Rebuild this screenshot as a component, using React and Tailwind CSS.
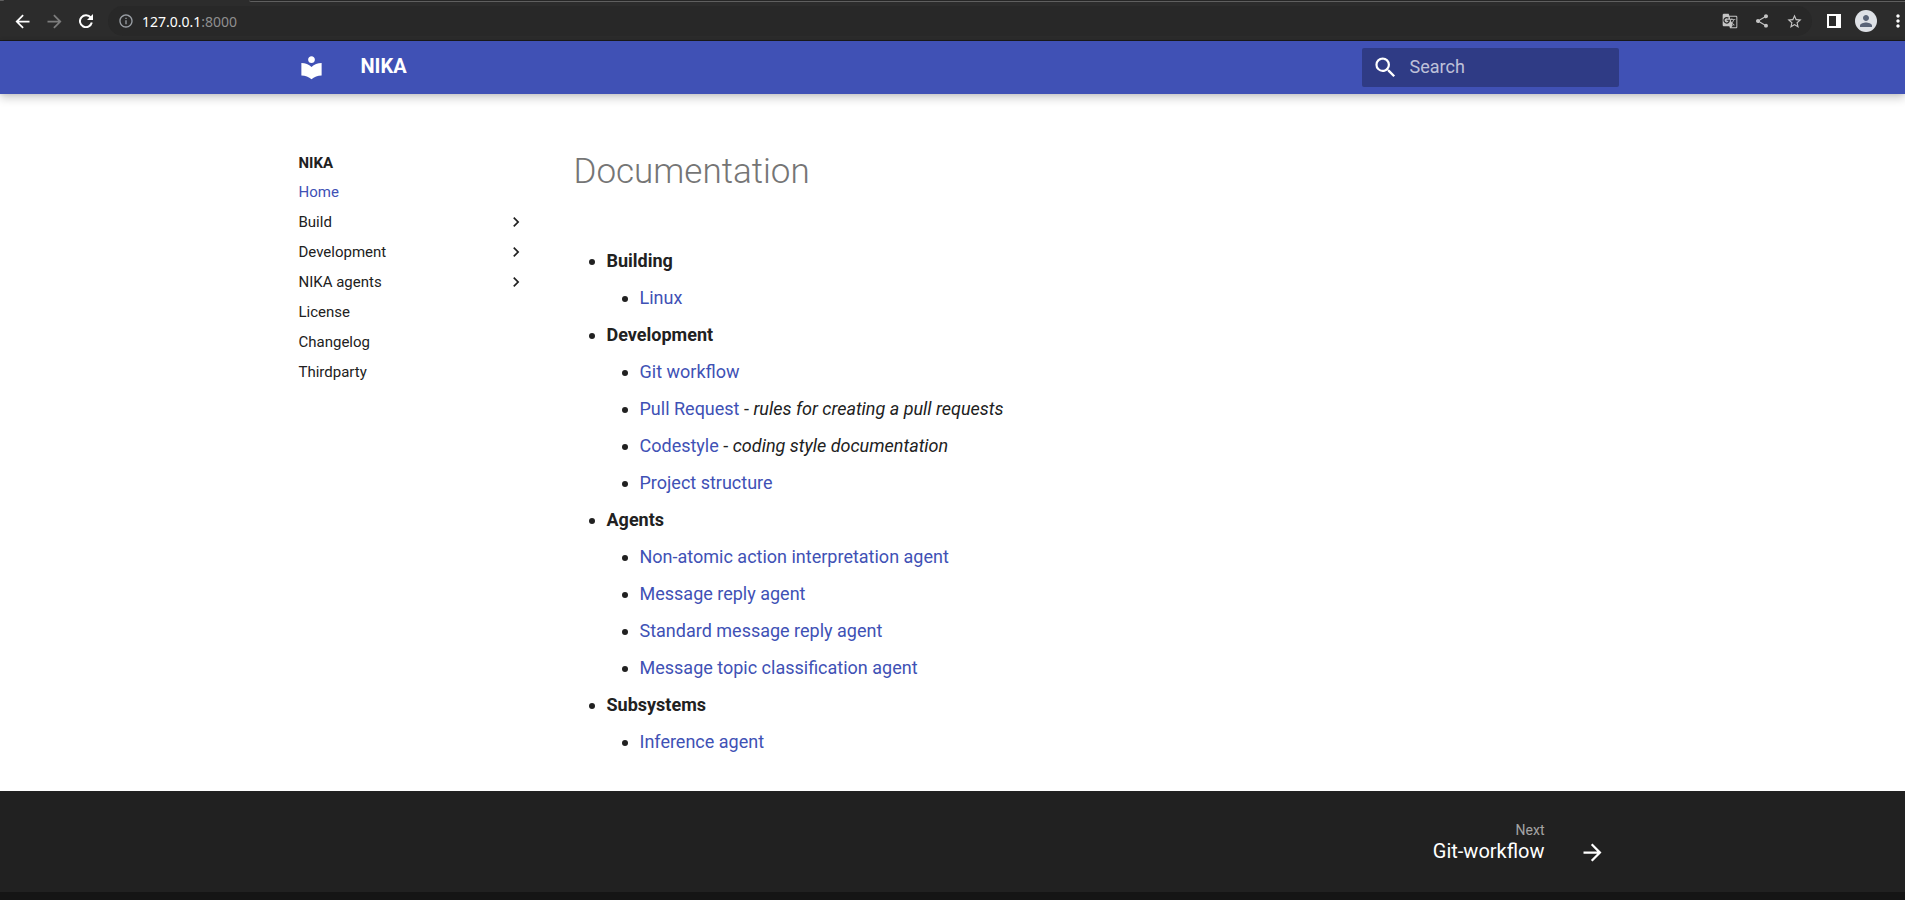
import React from "react";
import { MdArrowBack, MdArrowForward, MdInfoOutline, MdGTranslate, MdShare, MdStarBorder, MdPerson, MdMoreVert, MdLocalLibrary, MdSearch, MdChevronRight } from "react-icons/md";

const nav = [
  { label: "Home", active: true },
  { label: "Build", children: true },
  { label: "Development", children: true },
  { label: "NIKA agents", children: true },
  { label: "License" },
  { label: "Changelog" },
  { label: "Thirdparty" },
];

const sections = [
  { title: "Building", items: [["Linux"]] },
  {
    title: "Development",
    items: [
      ["Git workflow"],
      ["Pull Request", "rules for creating a pull requests"],
      ["Codestyle", "coding style documentation"],
      ["Project structure"],
    ],
  },
  {
    title: "Agents",
    items: [
      ["Non-atomic action interpretation agent"],
      ["Message reply agent"],
      ["Standard message reply agent"],
      ["Message topic classification agent"],
    ],
  },
  { title: "Subsystems", items: [["Inference agent"]] },
];

function IconButton({ label, className = "", children }) {
  return (
    <button type="button" aria-label={label} className={`flex shrink-0 items-center justify-center ${className}`}>
      {children}
    </button>
  );
}

function ReloadIcon() {
  return (
    <svg viewBox="0 0 14 14" width="14" height="14" fill="none" stroke="currentColor" strokeWidth="2">
      <path d="M11.8 3.6A6 6 0 1 0 12.8 8.6" />
      <path d="M14 0v6H8z" fill="currentColor" stroke="none" />
    </svg>
  );
}

function BrowserBar() {
  return (
    <div className="bg-[#2c2c2c]">
      <div className="flex h-0.5">
        <div className="h-px w-1 rounded-br-full bg-[#5f5f5f]" />
        <div className="w-[245px]" />
        <div className="flex-1 rounded-bl-sm border-b border-[#5f5f5f] bg-[#262626]" />
      </div>
      <div className="flex h-[39px] items-center border-b border-[#1b1b1b] pl-3">
        <IconButton label="Back" className="w-5 text-white"><MdArrowBack size={21} className="shrink-0" /></IconButton>
        <IconButton label="Forward" className="ml-3 w-5 text-[#7d7d7d]"><MdArrowForward size={21} className="shrink-0" /></IconButton>
        <IconButton label="Reload" className="ml-3 w-5 text-white"><ReloadIcon /></IconButton>
        <div className="ml-3 flex h-[30px] flex-1 items-center rounded-full bg-[#282828] px-2.5 text-[#c4c4c4]">
          <MdInfoOutline size={16} className="shrink-0 text-[#9a9fa5]" />
          <a href="#top" className="ml-2 flex-1 font-['Noto_Sans',sans-serif] text-[14px] text-[#8f8f8f]">
            <span className="text-white">127.0.0.1</span>:8000
          </a>
          <IconButton label="Translate" className="w-4"><MdGTranslate size={16} /></IconButton>
          <IconButton label="Share" className="ml-4 w-4"><MdShare size={16} /></IconButton>
          <IconButton label="Bookmark" className="ml-4 w-4"><MdStarBorder size={17} className="shrink-0" /></IconButton>
        </div>
        <IconButton label="Side panel" className="ml-[15px] w-3.5">
          <span className="size-3.5 border-2 border-r-[5px] border-white" />
        </IconButton>
        <IconButton label="Profile" className="ml-3.5 size-[22px] rounded-full bg-[#dee1e6] text-[#5a6478]"><MdPerson size={18} /></IconButton>
        <IconButton label="Menu" className="ml-3.5 w-3.5 text-white"><MdMoreVert size={20} className="shrink-0" /></IconButton>
      </div>
    </div>
  );
}

function Header() {
  return (
    <header className="relative bg-[#4051b5] text-white shadow-[0_0_4px_rgba(0,0,0,0.1),0_4px_9px_rgba(0,0,0,0.2)]">
      <div className="mx-auto flex h-[53px] max-w-[1342px] items-center pr-[5px]">
        <a href="#top" aria-label="NIKA home" className="ml-4"><MdLocalLibrary size={27} /></a>
        <span className="ml-9 flex-1 pb-[3px] text-[20px] leading-6 font-bold">NIKA</span>
        <label className="flex h-[39px] w-[257px] items-center rounded-xs bg-[#2f3b85] pl-2.5">
          <MdSearch size={27} className="shrink-0" />
          <input type="text" placeholder="Search" aria-label="Search" className="ml-[11px] min-w-0 flex-1 bg-transparent pb-0.5 text-[18px] outline-none placeholder:text-white/70" />
        </label>
      </div>
    </header>
  );
}

function Sidebar() {
  return (
    <nav aria-label="NIKA" className="w-[227px] shrink-0 pt-[13px] text-[15px] leading-5">
      <p className="mb-[9px] font-bold">NIKA</p>
      <ul className="flex flex-col gap-2.5">
        {nav.map((n) => (
          <li key={n.label}>
            <a href="#top" className={`flex items-center justify-between ${n.active ? "text-[#4051b5]" : ""}`}>
              {n.label}
              {n.children && <MdChevronRight size={20} />}
            </a>
          </li>
        ))}
      </ul>
    </nav>
  );
}

export default function App() {
  return (
    <div id="top" className="flex min-h-screen flex-col bg-white font-[Roboto,sans-serif] text-[#212121]">
      <BrowserBar />
      <Header />
      <main className="mx-auto flex w-full max-w-[1342px] flex-1 pt-[46px] pb-[26px] pl-[17px]">
        <Sidebar />
        <article className="ml-12 flex-1 pt-[9px]">
          <h1 className="text-[35px] leading-[46px] font-light text-[#757575]">Documentation</h1>
          <ul className="mt-[52px] ml-[33px] list-disc text-[18px] leading-7">
            {sections.map((s) => (
              <li key={s.title} className="mb-[9px]">
                <strong className="font-bold">{s.title}</strong>
                <ul className="ml-[33px] list-disc">
                  {s.items.map(([label, note]) => (
                    <li key={label} className="mt-[9px]">
                      <a href="#top" className="text-[#4051b5]">{label}</a>
                      {note && <> - <em>{note}</em></>}
                    </li>
                  ))}
                </ul>
              </li>
            ))}
          </ul>
        </article>
      </main>
      <footer className="bg-[#212121] text-white">
        <div className="mx-auto flex h-[101px] max-w-[1342px] justify-end pr-[18px]">
          <a href="#top" className="flex pt-[29px]">
            <span className="text-right">
              <span className="block text-[14px] leading-5 text-white/60">Next</span>
              <span className="block text-[20px] leading-[22px]">Git-workflow</span>
            </span>
            <MdArrowForward size={27} className="mt-[19px] ml-[34px]" />
          </a>
        </div>
        <div className="h-2 bg-[#151515]" />
      </footer>
    </div>
  );
}
